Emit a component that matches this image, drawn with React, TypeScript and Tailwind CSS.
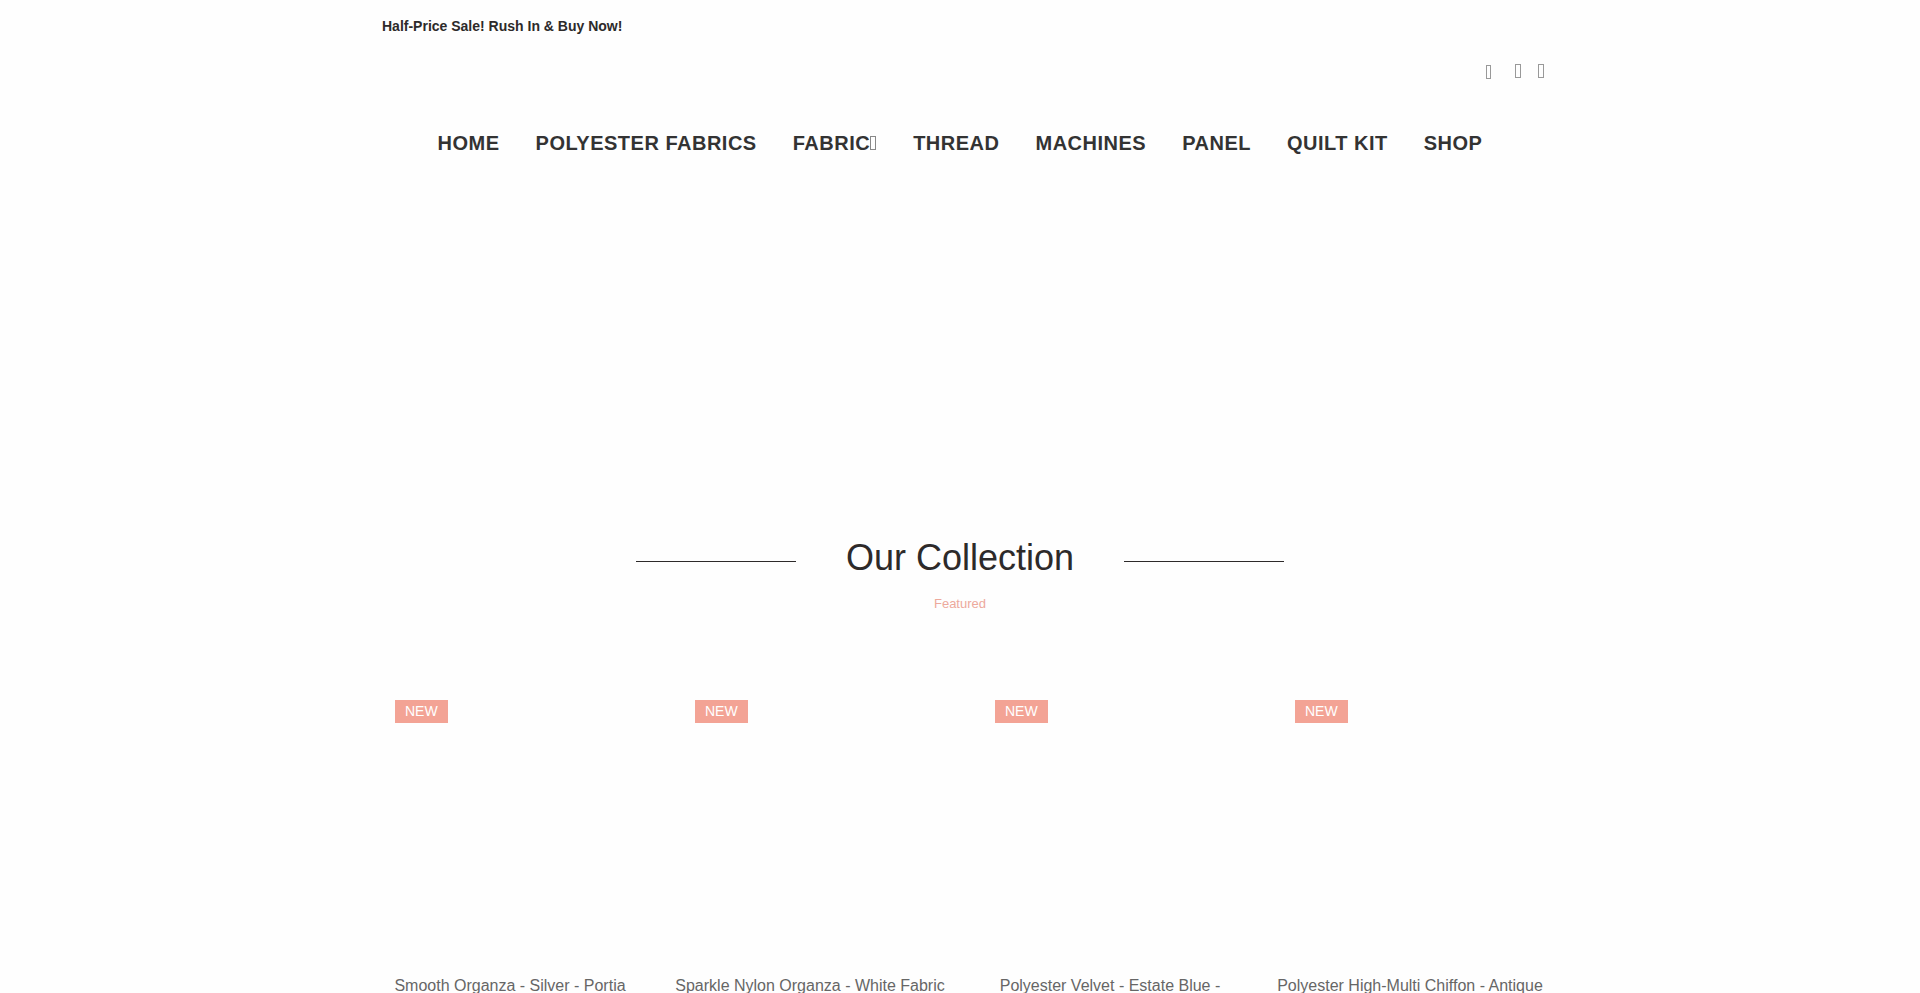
const menu = [
  { label: "Home" },
  { label: "Polyester Fabrics" },
  { label: "Fabric", dropdown: true },
  { label: "Thread" },
  { label: "Machines" },
  { label: "Panel" },
  { label: "Quilt Kit" },
  { label: "Shop" },
]

const products = [
  "Smooth Organza - Silver - Portia",
  "Sparkle Nylon Organza - White Fabric",
  "Polyester Velvet - Estate Blue -",
  "Polyester High-Multi Chiffon - Antique",
]

function Header() {
  return (
    <header>
      <div className="px-[22px] pt-4">
        <p className="text-sm font-bold text-[#2d2a2a]">Half-Price Sale! Rush In &amp; Buy Now!</p>
      </div>
      <div className="flex items-start justify-end px-4 pt-7">
        <button type="button" aria-label="Search" className="mt-px mr-6 h-[14px] w-[5px] border border-[#999999]" />
        <button type="button" aria-label="Account" className="mr-[17px] h-[14px] w-[6px] border border-[#999999]" />
        <button type="button" aria-label="Cart" className="h-[14px] w-[6px] border border-[#999999]" />
      </div>
      <nav className="mt-[50px] flex justify-center gap-9">
        {menu.map((item) => (
          <a key={item.label} href="#" className="text-xl font-bold uppercase tracking-wide text-[#333333]">
            {item.label}
            {item.dropdown && <span className="mr-px inline-block h-[14px] w-[6px] border border-[#888888]" />}
          </a>
        ))}
      </nav>
    </header>
  )
}

function ProductCard({ name }: { name: string }) {
  return (
    <article className="px-[15px]">
      <div className="relative h-[274px]">
        <span className="absolute top-0 left-5 bg-[#f3a395] px-[10px] text-sm leading-[23px] text-white">NEW</span>
      </div>
      <h3 className="text-center text-base text-[#666666]">
        <a href="#">{name}</a>
      </h3>
    </article>
  )
}

export default function App() {
  return (
    <div className="min-h-screen bg-[#fefefe] font-['Liberation_Sans',Arial,sans-serif]">
      <div className="mx-auto max-w-[1200px]">
        <Header />
        <main className="pt-[381px]">
          <div className="flex items-center justify-center gap-[50px]">
            <span className="mt-[7px] h-px w-40 bg-[#2d2a2a]" />
            <h2 className="text-4xl text-[#2d2a2a]">Our Collection</h2>
            <span className="mt-[7px] h-px w-40 bg-[#2d2a2a]" />
          </div>
          <p className="mt-4 text-center text-[13px] leading-5 text-[#eda99c]">Featured</p>
          <div className="mt-[86px] grid grid-cols-4">
            {products.map((name) => (
              <ProductCard key={name} name={name} />
            ))}
          </div>
        </main>
      </div>
    </div>
  )
}
